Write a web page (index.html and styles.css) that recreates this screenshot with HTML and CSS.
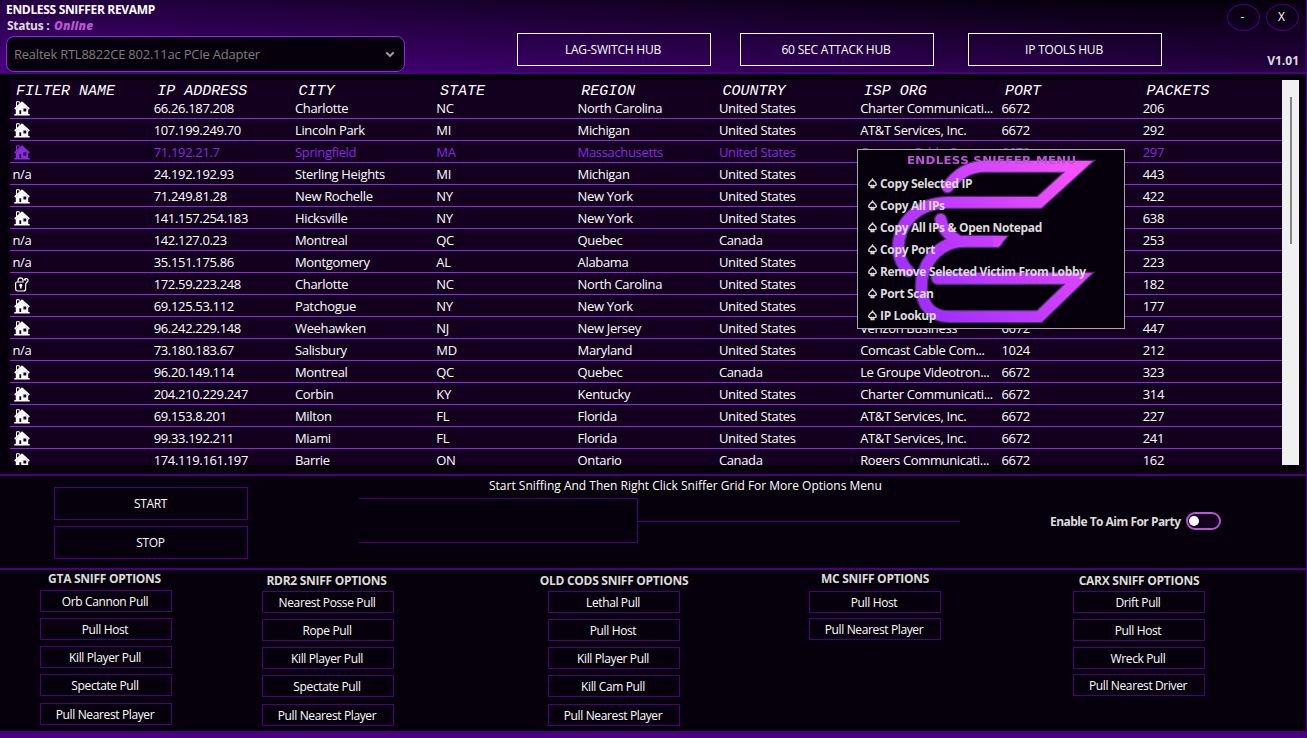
FILE: index.html
```html
<!DOCTYPE html>
<html lang="en">
<head>
<meta charset="utf-8">
<title>Endless Sniffer Revamp</title>
<link rel="stylesheet" href="styles.css">
</head>
<body>
<svg class="defs" width="0" height="0" aria-hidden="true">
  <symbol id="house" viewBox="0 0 16 15">
    <path d="M2.5 6V.7h2.8v2" fill="none" stroke="currentColor" stroke-width="1"/>
    <path d="M8 .2 15.8 7.2 14.8 8.8 8 2.9 1.2 8.8.2 7.2z" fill="currentColor"/>
    <path fill-rule="evenodd" d="M8 2.6 14.2 8.2V14H1.8V8.2zM5.4 9.3V13h1.8V9.3zM9.4 7.6v3h2.9v-3z" fill="currentColor"/>
    <path d="M.3 13h15.4v1.5H.3z" fill="currentColor"/>
  </symbol>
  <symbol id="lock" viewBox="0 0 16 15">
    <path d="M11.6 9V12a2 2 0 0 1-2 2H3.6a2 2 0 0 1-2-2V6.4a1.4 1.4 0 0 1 1.4-1.4H9.6M4 5V3.3a2.5 2.5 0 0 1 5 0V5" fill="none" stroke="currentColor" stroke-width="1.2"/>
    <path d="M6.8 8v3.6" stroke="currentColor" stroke-width="1.6"/>
    <circle cx="6.8" cy="8.3" r="1.5" fill="currentColor"/>
    <path d="M10.2 3.4a1.9 1.9 0 1 1 3.7.6c-.2.9-1.4 1.3-2 2.3l-.3 3M10.6 1.8l1.4 1.6" fill="none" stroke="currentColor" stroke-width="1.2"/>
  </symbol>
  <symbol id="spade" viewBox="0 0 10 10">
    <path d="M5 1.2C4.2 2.8 1.6 3.7 1.6 5.6c0 1.5 1.8 1.9 3 .8L3.8 8.6h2.4L5.4 6.4c1.2 1.1 3 .7 3-.8C8.4 3.7 5.8 2.8 5 1.2z" fill="none" stroke="currentColor" stroke-width="1.3"/>
  </symbol>
</svg>
<div class="window">
  <header class="header">
    <div class="identity">
      <div class="title">ENDLESS SNIFFER REVAMP</div>
      <div class="status">Status : <span class="online">Online</span></div>
      <div class="adapter"><span>Realtek RTL8822CE 802.11ac PCIe Adapter</span>
        <svg width="10" height="8" viewBox="0 0 10 8"><path d="M1.3 2.3 5 6 8.7 2.3" fill="none" stroke="#9a9a9a" stroke-width="2"/></svg>
      </div>
    </div>
    <nav class="hubs">
      <div class="hub">LAG-SWITCH HUB</div>
      <div class="hub">60 SEC ATTACK HUB</div>
      <div class="hub hub-last">IP TOOLS HUB</div>
    </nav>
    <div class="corner">
      <div class="controls"><div class="round">-</div><div class="round">X</div></div>
      <div class="version">V1.01</div>
    </div>
  </header>

  <main class="grid-area">
    <div class="table">
      <div class="row head"><b>FILTER NAME</b><b>IP ADDRESS</b><b>CITY</b><b>STATE</b><b>REGION</b><b>COUNTRY</b><b>ISP ORG</b><b>PORT</b><b>PACKETS</b></div>
      <div class="row"><i><svg class="ic"><use href="#house"/></svg></i><i>66.26.187.208</i><i>Charlotte</i><i>NC</i><i>North Carolina</i><i>United States</i><i>Charter Communicati...</i><i>6672</i><i>206</i></div>
      <div class="row"><i><svg class="ic"><use href="#house"/></svg></i><i>107.199.249.70</i><i>Lincoln Park</i><i>MI</i><i>Michigan</i><i>United States</i><i>AT&amp;T Services, Inc.</i><i>6672</i><i>292</i></div>
      <div class="row selected"><i><svg class="ic"><use href="#house"/></svg></i><i>71.192.21.7</i><i>Springfield</i><i>MA</i><i>Massachusetts</i><i>United States</i><i>Comcast Cable Com...</i><i>6672</i><i>297</i></div>
      <div class="row"><i>n/a</i><i>24.192.192.93</i><i>Sterling Heights</i><i>MI</i><i>Michigan</i><i>United States</i><i></i><i></i><i>443</i></div>
      <div class="row"><i><svg class="ic"><use href="#house"/></svg></i><i>71.249.81.28</i><i>New Rochelle</i><i>NY</i><i>New York</i><i>United States</i><i></i><i></i><i>422</i></div>
      <div class="row"><i><svg class="ic"><use href="#house"/></svg></i><i>141.157.254.183</i><i>Hicksville</i><i>NY</i><i>New York</i><i>United States</i><i></i><i></i><i>638</i></div>
      <div class="row"><i>n/a</i><i>142.127.0.23</i><i>Montreal</i><i>QC</i><i>Quebec</i><i>Canada</i><i></i><i></i><i>253</i></div>
      <div class="row"><i>n/a</i><i>35.151.175.86</i><i>Montgomery</i><i>AL</i><i>Alabama</i><i>United States</i><i></i><i></i><i>223</i></div>
      <div class="row"><i><svg class="ic"><use href="#lock"/></svg></i><i>172.59.223.248</i><i>Charlotte</i><i>NC</i><i>North Carolina</i><i>United States</i><i></i><i></i><i>182</i></div>
      <div class="row"><i><svg class="ic"><use href="#house"/></svg></i><i>69.125.53.112</i><i>Patchogue</i><i>NY</i><i>New York</i><i>United States</i><i></i><i></i><i>177</i></div>
      <div class="row"><i><svg class="ic"><use href="#house"/></svg></i><i>96.242.229.148</i><i>Weehawken</i><i>NJ</i><i>New Jersey</i><i>United States</i><i>Verizon Business</i><i>6672</i><i>447</i></div>
      <div class="row"><i>n/a</i><i>73.180.183.67</i><i>Salisbury</i><i>MD</i><i>Maryland</i><i>United States</i><i>Comcast Cable Com...</i><i>1024</i><i>212</i></div>
      <div class="row"><i><svg class="ic"><use href="#house"/></svg></i><i>96.20.149.114</i><i>Montreal</i><i>QC</i><i>Quebec</i><i>Canada</i><i>Le Groupe Videotron...</i><i>6672</i><i>323</i></div>
      <div class="row"><i><svg class="ic"><use href="#house"/></svg></i><i>204.210.229.247</i><i>Corbin</i><i>KY</i><i>Kentucky</i><i>United States</i><i>Charter Communicati...</i><i>6672</i><i>314</i></div>
      <div class="row"><i><svg class="ic"><use href="#house"/></svg></i><i>69.153.8.201</i><i>Milton</i><i>FL</i><i>Florida</i><i>United States</i><i>AT&amp;T Services, Inc.</i><i>6672</i><i>227</i></div>
      <div class="row"><i><svg class="ic"><use href="#house"/></svg></i><i>99.33.192.211</i><i>Miami</i><i>FL</i><i>Florida</i><i>United States</i><i>AT&amp;T Services, Inc.</i><i>6672</i><i>241</i></div>
      <div class="row"><i><svg class="ic"><use href="#house"/></svg></i><i>174.119.161.197</i><i>Barrie</i><i>ON</i><i>Ontario</i><i>Canada</i><i>Rogers Communicati...</i><i>6672</i><i>162</i></div>
    </div>
    <div class="scroll"><div class="thumb"></div></div>
  </main>

  <section class="control">
    <div class="run"><div class="big">START</div><div class="big">STOP</div></div>
    <div class="middle">
      <div class="hint">Start Sniffing And Then Right Click Sniffer Grid For More Options Menu</div>
      <div class="trace"><div class="bracket"></div><div class="lead"></div></div>
    </div>
    <div class="aim"><span>Enable To Aim For Party</span><div class="toggle"><div class="knob"></div></div></div>
  </section>

  <section class="options">
    <div class="group gta"><h2>GTA SNIFF OPTIONS</h2><div class="opt">Orb Cannon Pull</div><div class="opt">Pull Host</div><div class="opt">Kill Player Pull</div><div class="opt">Spectate Pull</div><div class="opt far">Pull Nearest Player</div></div>
    <div class="group rdr"><h2>RDR2 SNIFF OPTIONS</h2><div class="opt">Nearest Posse Pull</div><div class="opt">Rope Pull</div><div class="opt">Kill Player Pull</div><div class="opt">Spectate Pull</div><div class="opt far">Pull Nearest Player</div></div>
    <div class="group cod"><h2>OLD CODS SNIFF OPTIONS</h2><div class="opt">Lethal Pull</div><div class="opt">Pull Host</div><div class="opt">Kill Player Pull</div><div class="opt">Kill Cam Pull</div><div class="opt far">Pull Nearest Player</div></div>
    <div class="group mc"><h2>MC SNIFF OPTIONS</h2><div class="opt">Pull Host</div><div class="opt near">Pull Nearest Player</div></div>
    <div class="group carx"><h2>CARX SNIFF OPTIONS</h2><div class="opt">Drift Pull</div><div class="opt">Pull Host</div><div class="opt">Wreck Pull</div><div class="opt near">Pull Nearest Driver</div></div>
  </section>

  <div class="menu">
    <svg class="emblem" viewBox="24 30 798 534">
      <defs>
        <linearGradient id="neon" gradientUnits="userSpaceOnUse" x1="150" y1="480" x2="640" y2="60"><stop offset="0" stop-color="#9a2cff"/><stop offset=".5" stop-color="#c63cff"/><stop offset="1" stop-color="#f552ff"/></linearGradient>
        <g id="strokes" fill="none" stroke-linecap="round">
          <path d="M293 141C315 110 350 79 405 79H687L568 187H300C200 187 145 250 145 325C145 352 160 380 175 393"/>
          <path d="M272 238Q278 275 325 303"/>
          <path d="M262 415H687L568 530H300C245 530 214 495 214 440C214 375 262 304 345 304H440"/>
        </g>
      </defs>
      <use href="#strokes" stroke="#4c2f66" stroke-width="40"/>
      <path d="M430 286H478L448 323H430z" fill="#4c2f66"/>
      <use href="#strokes" stroke="url(#neon)" stroke-width="32"/>
      <path d="M430 288H472L446 320H430z" fill="#d443ff"/>
    </svg>
    <div class="menu-title">ENDLESS SNIFFER MENU</div>
    <div class="item"><svg><use href="#spade"/></svg>Copy Selected IP</div>
    <div class="item"><svg><use href="#spade"/></svg>Copy All IPs</div>
    <div class="item"><svg><use href="#spade"/></svg>Copy All IPs &amp; Open Notepad</div>
    <div class="item"><svg><use href="#spade"/></svg>Copy Port</div>
    <div class="item"><svg><use href="#spade"/></svg>Remove Selected Victim From Lobby</div>
    <div class="item"><svg><use href="#spade"/></svg>Port Scan</div>
    <div class="item"><svg><use href="#spade"/></svg>IP Lookup</div>
  </div>
</div>
</body>
</html>
```

FILE: styles.css
```css
* { box-sizing: border-box; }
body { margin: 0; background: #06000c; }
.defs { position: absolute; }
.window {
  position: relative;
  width: 1307px;
  height: 738px;
  display: flex;
  flex-direction: column;
  overflow: hidden;
  background: #06000c;
  border-right: 1px solid #4b0082;
  border-bottom: 7px solid #4b0082;
  color: #fff;
  font-family: "Open Sans", "Noto Sans", sans-serif;
  font-size: 13px;
  white-space: nowrap;
}

/* Header: bottom-edge colours, with the top-edge colours fading over them */
.header {
  position: relative;
  z-index: 0;
  flex: none;
  display: flex;
  height: 74px;
  border-bottom: 2px solid #4b0082;
  background: linear-gradient(to right, #4b0082, #230040);
}
.header::before {
  content: "";
  position: absolute;
  z-index: -1;
  inset: 0;
  background: linear-gradient(to right, #240042, #06000c 85%);
  -webkit-mask-image: linear-gradient(to bottom, #000, transparent);
  mask-image: linear-gradient(to bottom, #000, transparent);
}
.identity { width: 405px; padding-left: 6px; }
.title { height: 18px; line-height: 20px; font-weight: 700; font-size: 12px; letter-spacing: -.32px; }
.status { height: 18px; line-height: 16px; font-weight: 700; font-size: 12px; letter-spacing: -.3px; color: #dcdcdc; padding-left: 1px; }
.online { color: #ba55d3; font-style: italic; font-weight: 800; margin-left: 2px; letter-spacing: .1px; }
.adapter {
  display: flex; align-items: center; justify-content: space-between;
  height: 36px; padding: 0 9px 1px 7px;
  border: 1px solid #8a2be2; border-radius: 8px;
  background: #06000c; color: #7d7d7d; letter-spacing: -.23px;
}
.hubs { display: flex; padding: 33px 0 0 112px; gap: 29px; }
.hub {
  width: 194px; height: 33px; line-height: 31px; text-align: center; padding-right: 2px;
  border: 1px solid #fff; font-size: 12px; letter-spacing: -.2px;
}
.hub-last { margin-left: 5px; }
.corner { margin-left: auto; padding: 4px 7px 0 0; }
.controls { display: flex; gap: 6px; }
.round { width: 33px; height: 27px; line-height: 24px; text-align: center; padding-right: 2px; border: 1px solid #4b0082; border-radius: 50%; font-size: 12px; }
.version { padding-top: 21px; line-height: 18px; text-align: right; font-weight: 700; font-size: 12px; color: #dcdcdc; }

/* Captured address grid */
.grid-area { flex: none; display: flex; height: 402px; padding: 6px 0 9px 10px; border-bottom: 2px solid #4b0082; }
.table { width: 1272px; height: 385px; overflow: hidden; background: #12001e; }
.row {
  display: grid;
  grid-template-columns: repeat(9, 141.3px);
  height: 22px; line-height: 22px; padding-left: 2px;
  border-bottom: 1px solid #8a2be2;
  letter-spacing: -.34px;
}
.row i { font-style: normal; padding-left: .4px; }
.row b { font-weight: 400; padding-left: 4px; }
.row.head {
  height: 17px; line-height: 23px; border: 0;
  font-family: "Liberation Mono", monospace; font-style: italic; font-size: 15px; letter-spacing: 0;
}
.selected { color: #8a2be2; }
.ic { display: block; width: 16px; height: 15px; margin: 4px 0 0 1.6px; }
.scroll { width: 17px; height: 385px; padding: 17px 0 0 8px; background: #f0f0f0; }
.thumb { width: 2px; height: 147px; background: #858585; }

/* Start / stop */
.control { flex: none; display: flex; height: 94px; border-bottom: 2px solid #4b0082; }
.run { display: flex; flex-direction: column; gap: 6px; padding: 11px 0 0 54px; }
.big { width: 194px; height: 33px; line-height: 31px; text-align: center; border: 1px solid #4b0082; font-size: 12px; letter-spacing: -.35px; padding-right: 1px; }
.middle { width: 601px; margin-left: 111px; }
.hint { height: 22px; line-height: 19px; padding-left: 130px; font-size: 12px; letter-spacing: 0; }
.trace { display: flex; }
.bracket { width: 279px; height: 45px; border: 1px solid #4b0082; border-left: 0; }
.lead { flex: 1; height: 24px; border-bottom: 1px solid #4b0082; }
.aim { display: flex; align-items: center; gap: 6px; height: 90px; margin-left: 90px; font-weight: 700; font-size: 12px; letter-spacing: -.52px; color: #dcdcdc; }
.aim span { width: 130px; }
.toggle { width: 35px; height: 18px; padding: 2px 1px; border: 2px solid #ba55d3; border-radius: 9px; background: #12001e; }
.knob { width: 10px; height: 10px; border-radius: 50%; background: #fff; }

/* Pull options */
.options { display: flex; align-items: flex-start; }
.group { display: flex; flex-direction: column; align-items: center; width: 132px; padding-top: 21px; gap: 6px; }
.group h2 { margin: -20px 0 -5px; height: 19px; line-height: 19px; font-size: 12px; font-weight: 700; color: #dcdcdc; letter-spacing: -.28px; }
.opt { flex: none; width: 132px; height: 22px; line-height: 22px; text-align: center; border: 1px solid #4b0082; font-size: 12px; letter-spacing: -.37px; padding-right: 2px; }
.far { margin-top: 1px; }
.near { margin-top: -1px; }
.gta { margin-left: 40px; padding-top: 20px; }
.gta h2 { line-height: 17px; }
.group.gta h2, .group.rdr h2 { padding-right: 3px; }
.rdr { margin-left: 90px; }
.cod { margin-left: 154px; }
.mc { margin-left: 129px; }
.mc h2 { line-height: 15px; }
.carx { margin-left: 132px; }

/* Context menu over the grid */
.menu {
  position: absolute; left: 857px; top: 149px; width: 268px; height: 180px;
  border: 1px solid #a9a9a9; background: #06000c; overflow: hidden;
  color: #dcdcdc; font-weight: 700; font-size: 12px; letter-spacing: -.34px;
}
.emblem { position: absolute; left: 0; top: 0; width: 266px; height: 178px; }
.menu-title {
  position: relative; height: 22px; line-height: 22px; padding-left: 49px;
  font-family: "DejaVu Sans", sans-serif; font-size: 10px; letter-spacing: .2px; color: #ba55d3;
  transform: scaleX(1.19); transform-origin: 49px 50%;
}
.item { position: relative; display: flex; align-items: center; height: 22px; padding-left: 9px; }
.item svg { width: 11px; height: 11px; margin-right: 2px; }
```
